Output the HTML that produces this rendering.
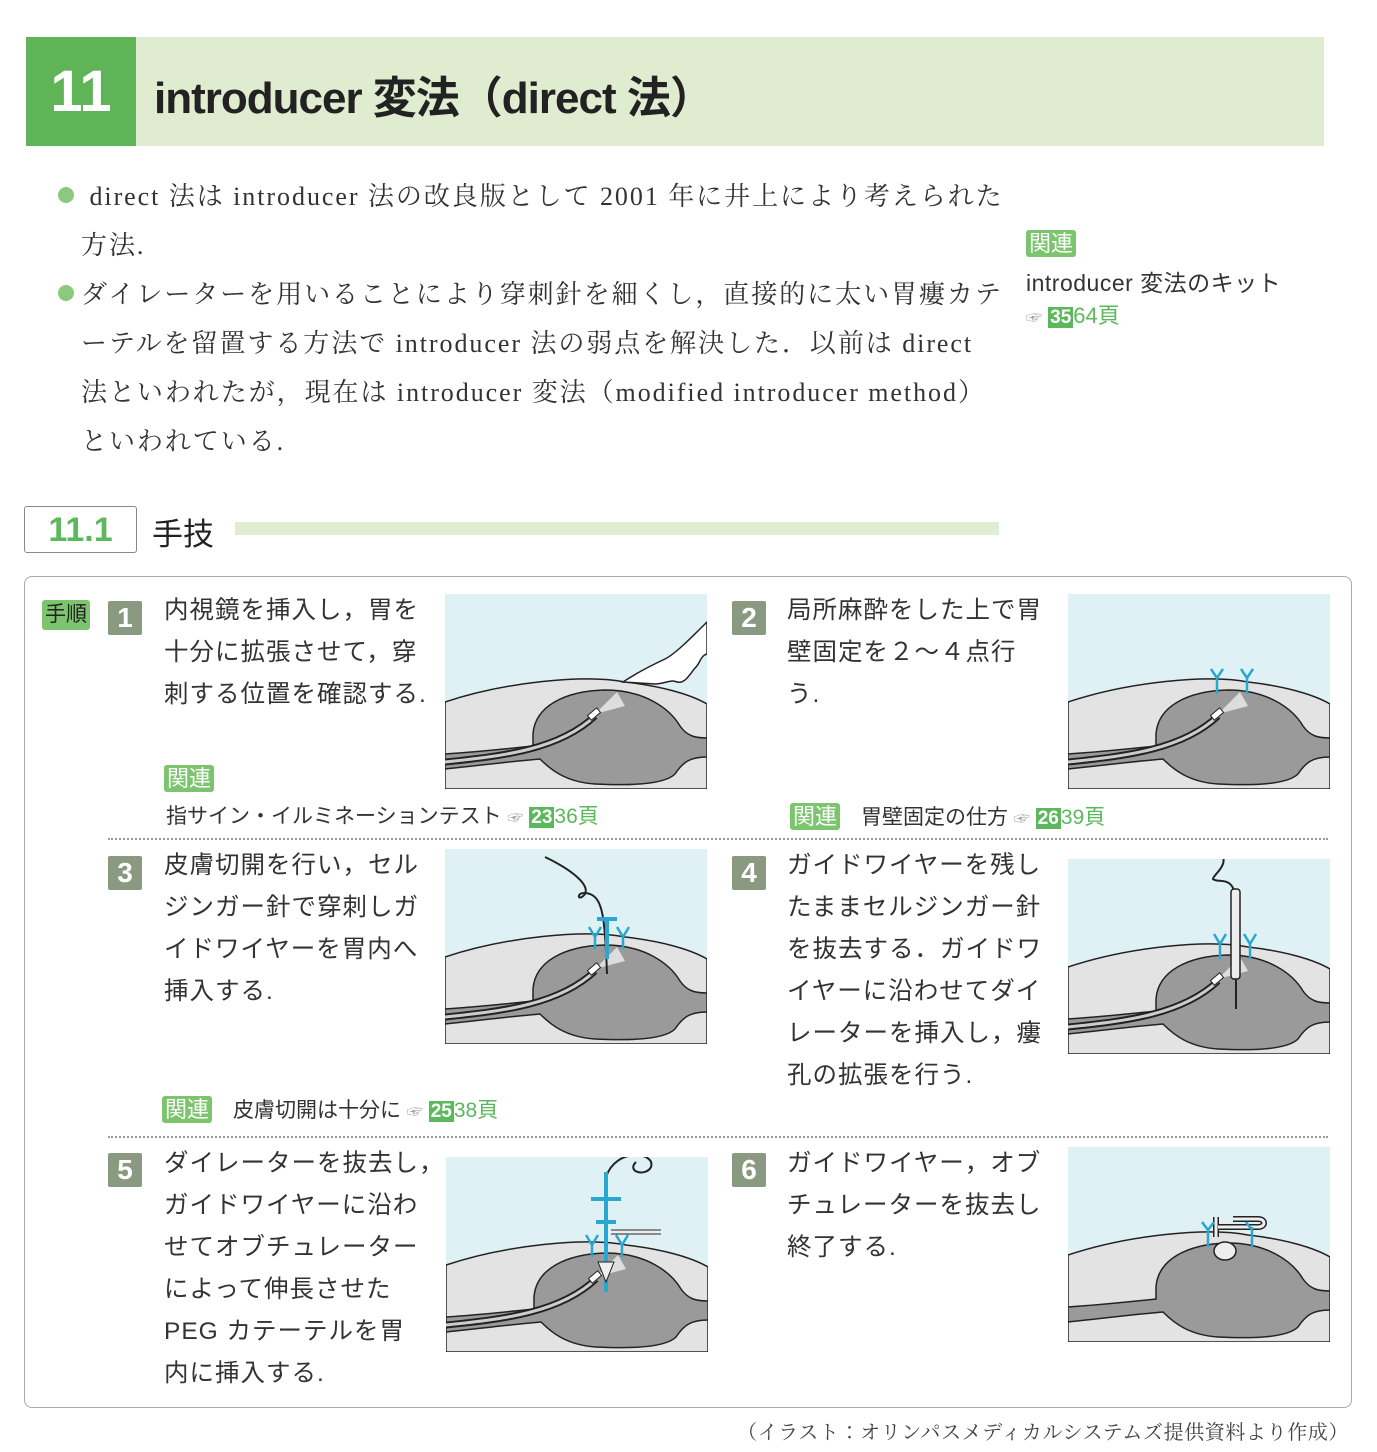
<!DOCTYPE html>
<html><head><meta charset="utf-8"><style>
body{margin:0;width:1377px;height:1452px;background:#fff;position:relative;font-family:"Liberation Sans","Noto Sans CJK JP",sans-serif;color:#333;overflow:hidden}
.a{position:absolute}
.serif{font-family:"Liberation Serif","Noto Serif CJK JP",serif}
.tag{display:inline-block;background:#7cc46e;color:#fff;border-radius:3px;padding:0 3px;font-size:22px;line-height:27px}
.num{position:absolute;width:34px;height:34px;background:#8a9a80;color:#fff;font-weight:bold;font-size:28px;line-height:34px;text-align:center;border-radius:2px}
.st{position:absolute;font-size:24.5px;line-height:42px;color:#333;letter-spacing:1px}
.ref{position:absolute;font-size:21px;color:#333;white-space:nowrap}
.g{color:#5cb85c}.gb{background:#5cb85c;color:#fff;font-size:19px;padding:0 2px;font-weight:bold}
.dot{position:absolute;left:108px;width:1220px;border-top:2px dotted #999}
svg.p{position:absolute;width:262px;height:195px}
.bl{position:absolute;left:58px;width:16px;height:16px;border-radius:50%;background:#8cc97e}
</style></head><body>
<svg width="0" height="0" style="position:absolute"><defs>
<g id="base">
<rect width="262" height="195" fill="#e0f1f6"/>
<path d="M0,108 C60,88 140,80 180,88 C215,92 245,100 262,110 V195 H0 Z" fill="#e3e3e3" stroke="#222" stroke-width="1.5"/>
<path d="M88,140 C90,112 120,97 160,96 C200,96 225,115 235,132 C242,142 250,144 262,144 V163 C245,163 238,168 230,180 C220,190 190,192 150,190 C120,188 105,175 95,165 C60,168 30,172 0,175 V160 C30,158 60,155 88,152 Z" fill="#9a9a9a" stroke="#222" stroke-width="1.5"/>
</g>
<g id="scope">
<path d="M0,168 C60,162 115,155 150,122" fill="none" stroke="#222" stroke-width="7"/>
<path d="M0,168 C60,162 115,155 150,122" fill="none" stroke="#ccc" stroke-width="3"/>
<path d="M150,120 L172,98 L180,112 Z" fill="#eee" opacity=".8"/>
<rect x="143" y="117" width="12" height="6" fill="#fff" stroke="#222" transform="rotate(-40 149 120)"/>
</g>
</defs></svg>

<div class="a" style="left:26px;top:37px;width:110px;height:109px;background:#5fb457;color:#fff;font-weight:bold;font-size:58px;line-height:109px;text-align:center">11</div>
<div class="a" style="left:136px;top:37px;width:1188px;height:109px;background:#e0ecd0"></div>
<div class="a" style="left:154px;top:62px;font-size:44px;font-weight:bold;color:#222;letter-spacing:-1px">introducer 変法（direct 法）</div>

<div class="bl" style="top:187px"></div>
<div class="bl" style="top:285px"></div>
<div class="a serif" style="left:81px;top:172px;width:960px;font-size:26px;line-height:49px;color:#333;letter-spacing:1.95px;white-space:nowrap">
<div>&nbsp;direct 法は introducer 法の改良版として 2001 年に井上により考えられた</div>
<div>方法.</div>
<div>ダイレーターを用いることにより穿刺針を細くし，直接的に太い胃瘻カテ</div>
<div>ーテルを留置する方法で introducer 法の弱点を解決した．以前は direct</div>
<div>法といわれたが，現在は introducer 変法（modified introducer method）</div>
<div>といわれている.</div>
</div>

<div class="a" style="left:1026px;top:230px"><span class="tag">関連</span></div>
<div class="a" style="left:1026px;top:264px;font-size:23px;color:#333;letter-spacing:0.5px">introducer 変法のキット</div>
<div class="a" style="left:1026px;top:298px;font-size:22px"><span style="color:#999;font-size:16px">☞</span> <span class="gb">35</span><span class="g">64頁</span></div>

<div class="a" style="left:24px;top:506px;width:111px;height:45px;border:1.5px solid #888;border-radius:3px;color:#5cb85c;font-weight:bold;font-size:34px;line-height:46px;text-align:center">11.1</div>
<div class="a" style="left:152px;top:509px;font-size:31px;color:#222">手技</div>
<div class="a" style="left:235px;top:522px;width:764px;height:13px;background:#dfedd2"></div>

<div class="a" style="left:24px;top:576px;width:1326px;height:830px;border:1.5px solid #aaa;border-radius:8px"></div>

<div class="a" style="left:42px;top:600px"><span class="tag" style="color:#222;font-size:21px;line-height:30px">手順</span></div>
<div class="num" style="left:108px;top:601px">1</div>
<div class="st" style="left:164px;top:590px">内視鏡を挿入し，胃を<br>十分に拡張させて，穿<br>刺する位置を確認する.</div>
<svg class="p" viewBox="0 0 262 195" style="left:445px;top:594px"><use href="#base"/><use href="#scope"/>
<path d="M178,88 C190,80 205,72 220,65 C230,60 245,45 262,28 V60 C255,62 255,70 250,74 C245,80 240,90 232,88 C225,85 220,90 210,90 Z" fill="#fff" stroke="#222" stroke-width="1.5"/></svg>
<div class="a" style="left:164px;top:765px"><span class="tag">関連</span></div>
<div class="ref" style="left:166px;top:800px">指サイン・イルミネーションテスト <span style="color:#999;font-size:16px">☞</span> <span class="gb">23</span><span class="g">36頁</span></div>

<div class="num" style="left:732px;top:601px">2</div>
<div class="st" style="left:787px;top:590px">局所麻酔をした上で胃<br>壁固定を２～４点行<br>う.</div>
<svg class="p" viewBox="0 0 262 195" style="left:1068px;top:594px"><use href="#base"/><use href="#scope"/>
<path d="M143,75 L149,84 L155,75 M149,84 V100 M173,75 L179,84 L185,75 M179,84 V100" stroke="#2aa7d0" stroke-width="2.5" fill="none"/></svg>
<div class="ref" style="left:790px;top:801px"><span class="tag">関連</span>　胃壁固定の仕方 <span style="color:#999;font-size:16px">☞</span> <span class="gb">26</span><span class="g">39頁</span></div>

<div class="dot" style="top:838px"></div>

<div class="num" style="left:108px;top:856px">3</div>
<div class="st" style="left:164px;top:845px">皮膚切開を行い，セル<br>ジンガー針で穿刺しガ<br>イドワイヤーを胃内へ<br>挿入する.</div>
<svg class="p" viewBox="0 0 262 195" style="left:445px;top:849px"><use href="#base"/><use href="#scope"/>
<path d="M100,8 C125,20 145,35 140,45 C132,55 130,40 145,45 C158,50 160,70 162,125" stroke="#222" stroke-width="2" fill="none"/>
<path d="M152,70 H172 M162,70 V110" stroke="#2aa7d0" stroke-width="4" fill="none"/>
<path d="M144,78 L150,88 L156,78 M150,88 V100 M172,78 L178,88 L184,78 M178,88 V100" stroke="#2aa7d0" stroke-width="2.5" fill="none"/></svg>
<div class="ref" style="left:162px;top:1094px"><span class="tag">関連</span>　皮膚切開は十分に <span style="color:#999;font-size:16px">☞</span> <span class="gb">25</span><span class="g">38頁</span></div>

<div class="num" style="left:732px;top:856px">4</div>
<div class="st" style="left:787px;top:845px">ガイドワイヤーを残し<br>たままセルジンガー針<br>を抜去する．ガイドワ<br>イヤーに沿わせてダイ<br>レーターを挿入し，瘻<br>孔の拡張を行う.</div>
<svg class="p" viewBox="0 0 262 195" style="left:1068px;top:859px"><use href="#base"/><use href="#scope"/>
<path d="M150,-10 C165,5 145,15 145,20 C150,25 165,15 168,40 V150" stroke="#222" stroke-width="2" fill="none"/>
<rect x="163" y="30" width="9" height="90" rx="3" fill="#eee" stroke="#222" stroke-width="1.5"/>
<path d="M146,75 L152,85 L158,75 M152,85 V100 M176,75 L182,85 L188,75 M182,85 V100" stroke="#2aa7d0" stroke-width="2.5" fill="none"/></svg>

<div class="dot" style="top:1136px"></div>

<div class="num" style="left:108px;top:1153px">5</div>
<div class="st" style="left:164px;top:1143px">ダイレーターを抜去し，<br>ガイドワイヤーに沿わ<br>せてオブチュレーター<br>によって伸長させた<br>PEG カテーテルを胃<br>内に挿入する.</div>
<svg class="p" viewBox="0 0 262 195" style="left:446px;top:1157px"><use href="#base"/><use href="#scope"/>
<path d="M160,20 C170,-10 210,-5 205,10 C200,20 180,15 190,5" stroke="#222" stroke-width="2" fill="none"/>
<path d="M160,15 V135" stroke="#2aa7d0" stroke-width="4" fill="none"/>
<path d="M145,42 H175 M150,65 H170" stroke="#2aa7d0" stroke-width="4"/>
<path d="M165,75 H215" stroke="#222" stroke-width="5"/><path d="M165,75 H215" stroke="#eee" stroke-width="3"/>
<path d="M152,105 L160,125 L168,105 Z" fill="#eee" stroke="#222"/>
<path d="M140,78 L146,88 L152,78 M146,88 V100 M170,78 L176,88 L182,78 M176,88 V100" stroke="#2aa7d0" stroke-width="2.5" fill="none"/></svg>

<div class="num" style="left:732px;top:1153px">6</div>
<div class="st" style="left:787px;top:1143px">ガイドワイヤー，オブ<br>チュレーターを抜去し<br>終了する.</div>
<svg class="p" viewBox="0 0 262 195" style="left:1068px;top:1147px"><use href="#base"/>
<path d="M148,70 V90 M165,72 H190 C198,72 198,80 190,80 H150" stroke="#222" stroke-width="6" fill="none"/>
<path d="M148,70 V90 M165,72 H190 C198,72 198,80 190,80 H150" stroke="#eee" stroke-width="3" fill="none"/>
<ellipse cx="157" cy="104" rx="11" ry="9" fill="#eee" stroke="#222" stroke-width="1.5"/>
<path d="M134,75 L140,83 L146,75 M140,83 V100 M178,75 L184,83 M184,80 V100" stroke="#2aa7d0" stroke-width="2.5" fill="none"/></svg>

<div class="a serif" style="right:28px;top:1416px;font-size:20px;color:#444;letter-spacing:0.6px">（イラスト：オリンパスメディカルシステムズ提供資料より作成）</div>
</body></html>
